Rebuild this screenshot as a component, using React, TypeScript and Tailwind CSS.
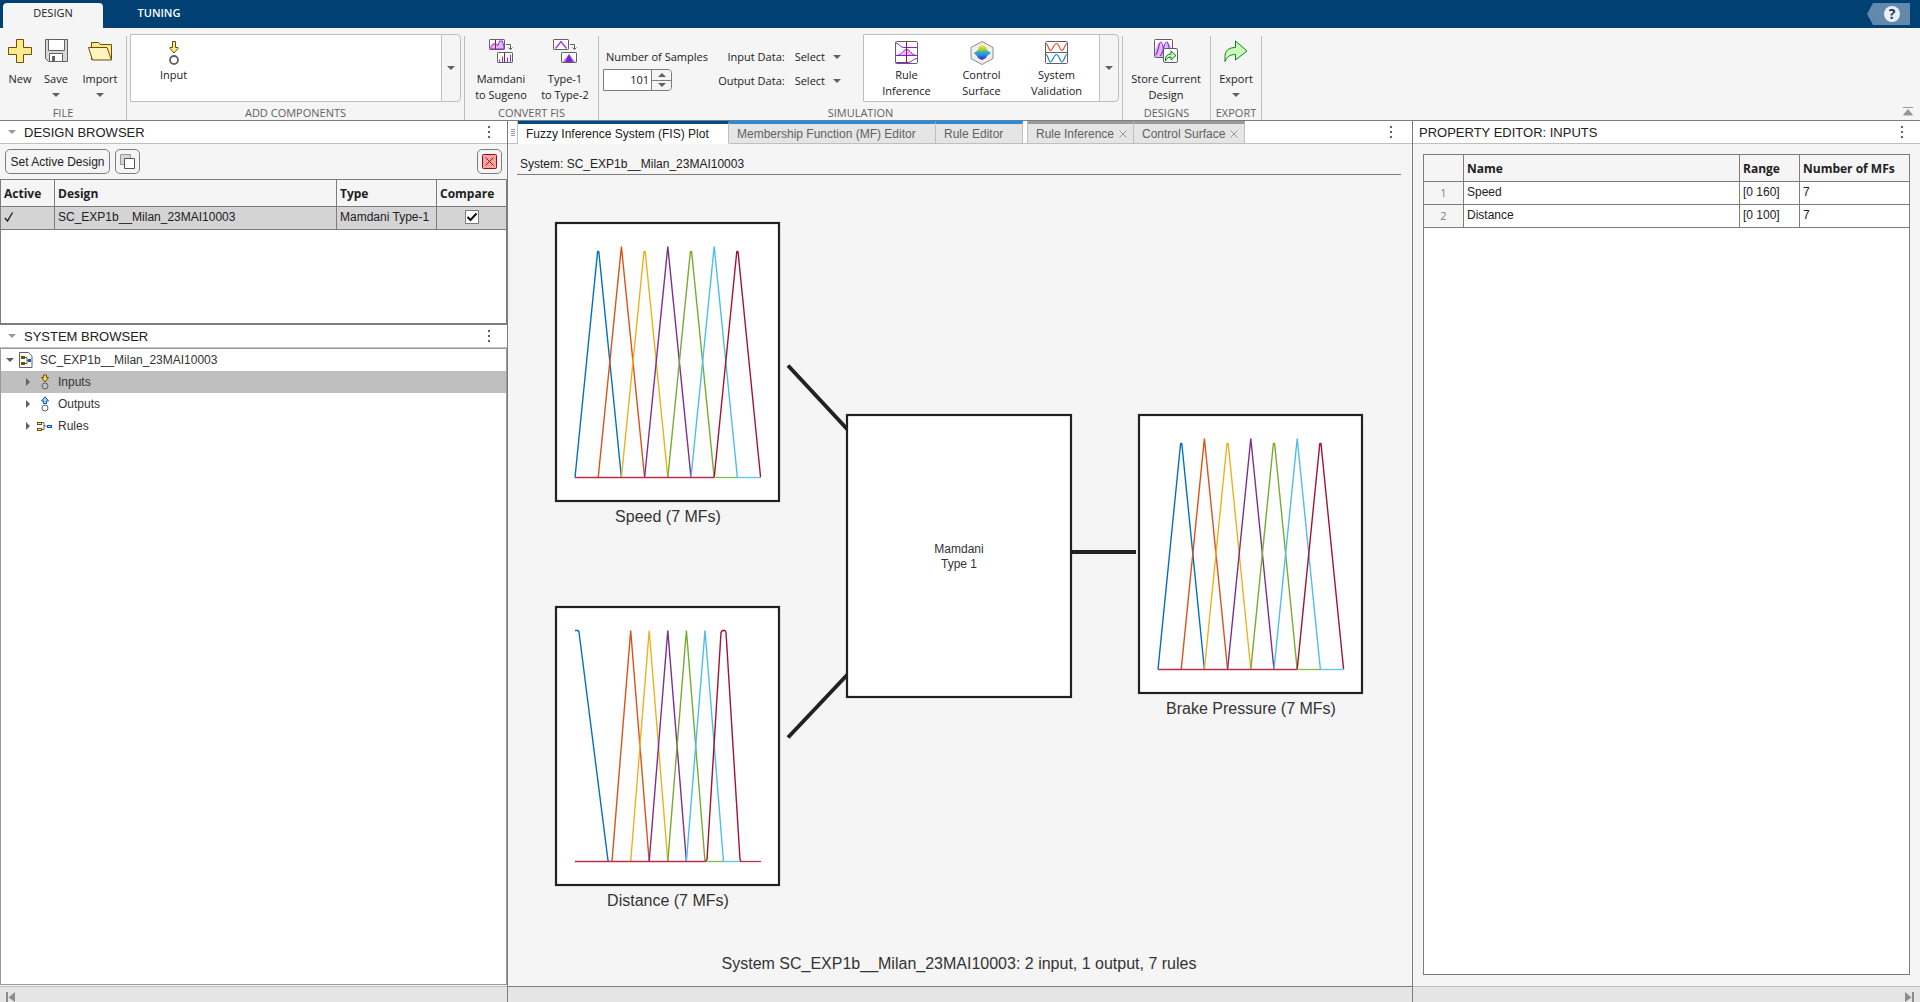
import { ReactNode } from "react";

const UI = "font-['Open_Sans',sans-serif]";

function Caret({ className = "text-[#616161]" }: { className?: string }) {
  return (
    <svg className={"h-1 w-2 shrink-0 " + className} viewBox="0 0 8 4" aria-hidden="true">
      <path d="M0 0h8L4 4z" fill="currentColor" />
    </svg>
  );
}

function Dots() {
  return (
    <button type="button" aria-label="Panel menu" className="flex h-5 w-3 flex-col items-center justify-center gap-[3px]">
      <span className="size-[2px] bg-[#616161]" />
      <span className="size-[2px] bg-[#616161]" />
      <span className="size-[2px] bg-[#616161]" />
    </button>
  );
}

/* ---------- toolstrip icons ---------- */

const NewIcon = () => (
  <svg className="size-6" viewBox="0 0 24 24" aria-hidden="true">
    <path d="M8.5.5h7v8h8v7h-8v8h-7v-8h-8v-7h8z" fill="#ffe98f" stroke="#6f4f00" />
  </svg>
);
const SaveIcon = () => (
  <svg className="size-6" viewBox="-1 0 24 24" aria-hidden="true">
    <path d="M.5.5h22v22H3.500l-3-3z" fill="#d6d6d6" stroke="#616161" />
    <path d="M3.500.5h16v11h-16z" fill="#fff" stroke="#616161" />
    <path d="M4.500 14.500h13v8h-13z" fill="#fff" stroke="#616161" />
    <path d="M7 17h3v5H7z" fill="#616161" />
  </svg>
);
const FolderIcon = () => (
  <svg className="size-6" viewBox="0 0 24 24" aria-hidden="true">
    <path d="M3.500 9V3.500h7l2 2h11v15h-20z" fill="#ffe98f" stroke="#6f4f00" />
    <path d="M.5 8.500h18.500l4.500 12.500H4.500z" fill="#fff3c0" stroke="#6f4f00" />
  </svg>
);
const InputIcon = () => (
  <svg className="size-6" viewBox="0 0 24 24" aria-hidden="true">
    <path d="M10.500.5h3v6h2.500v1L12 12 8 7.500v-1h2.500z" fill="#ffe98f" stroke="#6f4f00" />
    <circle cx="12" cy="19" r="4" fill="#fff" stroke="#616161" strokeWidth="1.800" />
  </svg>
);
const MamdaniIcon = () => (
  <svg className="size-6" viewBox="0 0 24 24" aria-hidden="true">
    <rect x=".5" y=".5" width="15" height="10" rx=".6" fill="#fff" stroke="#616161" />
    <path d="M2 10V7.500L4 5h3l2 1.500L10.500 2h3L15 8v2z" fill="#e0b8f8" stroke="#8a2be2" />
    <path d="M6.500 1v9" stroke="#a2142f" />
    <path d="M17 5.500h4.500V10M19.500 8.500l2 2 2-2" fill="none" stroke="#616161" />
    <rect x="8.500" y="13.500" width="15" height="10" rx=".6" fill="#fff" stroke="#616161" />
    <path d="M10.500 23.500v-3M13.500 23.500v-6M18.500 23.500v-5M21.500 23.500v-8" stroke="#8a2be2" />
    <path d="M15.500 14v9" stroke="#a2142f" />
  </svg>
);
const TypeIcon = () => (
  <svg className="size-6" viewBox="0 0 24 24" aria-hidden="true">
    <rect x=".5" y=".5" width="15" height="10" rx=".6" fill="#fff" stroke="#616161" />
    <path d="M2.500 9.500l5.500-7 5.500 7" fill="none" stroke="#9333ea" strokeWidth="1.300" />
    <path d="M17 5.500h4.500V10M19.500 8.500l2 2 2-2" fill="none" stroke="#616161" />
    <rect x="8.500" y="13.500" width="15" height="10" rx=".6" fill="#fff" stroke="#616161" />
    <path d="M9.500 23l6.500-8 6.500 8z" fill="#c084fc" />
    <path d="M12 23l4-8 4 8z" fill="#7e22ce" />
  </svg>
);
const RuleIcon = () => (
  <svg className="size-6" viewBox="0 0 24 24" aria-hidden="true">
    <rect x=".5" y=".5" width="22" height="22" rx="1" fill="#fff" stroke="#616161" />
    <path d="M4 14c4 0 5-6 8-6s4 6 8 6z" fill="#e0b8f8" />
    <path d="M1 2c3 0 4 4.500 8 4.500h13M1 14.500c6 0 7-6 10.500-6s5 6 10.500 6M1 14.500h21M1 21.500h12c4 0 5-4 9-4" fill="none" stroke="#8a1fd0" />
    <path d="M11.500 1v21" stroke="#a2142f" />
  </svg>
);
const SurfaceIcon = () => (
  <svg className="size-6" viewBox="0 0 24 24" aria-hidden="true">
    <defs>
      <linearGradient id="surf" x1="0" y1="0" x2="0" y2="1">
        <stop offset="0" stopColor="#f9f014" />
        <stop offset=".3" stopColor="#b5c832" />
        <stop offset=".48" stopColor="#27b7b0" />
        <stop offset=".7" stopColor="#2b7ff0" />
        <stop offset="1" stopColor="#3a20a0" />
      </linearGradient>
    </defs>
    <path d="M12 .5l11 6v11l-11 6-11-6v-11z" fill="#f0f0f0" stroke="#8a8a8a" />
    <path d="M12 4l4 2 1 3 4 3-4 3-1 2-4 2-4-2-1-2-3-3 4-3 1-3z" fill="url(#surf)" />
  </svg>
);
const ValidationIcon = () => (
  <svg className="size-6" viewBox="0 0 24 24" aria-hidden="true">
    <rect x=".5" y=".5" width="22" height="22" rx="1" fill="#fff" stroke="#616161" />
    <path d="M1 11.500h21" stroke="#616161" />
    <path d="M1 2.500c2 0 2.500 7 4.500 7s3.500-7 6-7 3.500 7 5.500 7 3-7 5-7" fill="none" stroke="#e0572a" strokeWidth="1.200" />
    <path d="M1 13.500c2 0 2.500 7.500 4.500 7.500s3.500-7.500 6-7.500 3.500 7.500 5.500 7.500 3-7.500 5-7.500" fill="none" stroke="#1f7fd0" strokeWidth="1.200" />
  </svg>
);
const StoreIcon = () => (
  <svg className="size-6" viewBox="0 0 24 24" aria-hidden="true">
    <rect x=".5" y=".5" width="18" height="18" rx="1" fill="#fff" stroke="#616161" />
    <path d="M1 18V10c1.500 0 2-6 4-7 2 2 3 6 4.500 6s2-4 4.500-6c2 1 2.500 7 4 7v8z" fill="#e0b8f8" />
    <path d="M1.500 16C4 14 5 3 7 3s3 15 6 15M6 17c3-1 4-14 6.500-14 2 0 2 6 5 12" fill="none" stroke="#8a2be2" strokeWidth="1.200" />
    <rect x="9.500" y="9.500" width="14" height="14" rx="1.500" fill="#fff" stroke="#616161" />
    <path d="M11.500 22v-2c0-3 2-5 5.500-5v-3l5 4.500-5 4.500v-3c-3 0-4.500 1.500-5.500 4z" fill="#c8f5b8" stroke="#127c1e" />
  </svg>
);
const ExportIcon = () => (
  <svg className="size-6" viewBox="0 0 24 24" aria-hidden="true">
    <path d="M1 22.500v-5C1 11.500 5 8.500 11.500 8.500V2l11.500 10-11.500 9v-5.500C6 15.500 2.500 18 1 22.500z" fill="#c9ffb8" stroke="#12801f" />
  </svg>
);

/* ---------- toolstrip parts ---------- */

function Tool({ icon, lines, caret, width }: { icon: ReactNode; lines: string[]; caret?: boolean; width: string }) {
  return (
    <button type="button" className={"flex shrink-0 flex-col items-center " + width}>
      {icon}
      <span className="mt-2 flex flex-col whitespace-nowrap text-center text-[11px] leading-4">
        {lines.map((l) => (
          <span key={l}>{l}</span>
        ))}
      </span>
      {caret && <span className="flex h-4 items-center"><Caret /></span>}
    </button>
  );
}

function GalleryItem({ icon, lines }: { icon: ReactNode; lines: string[] }) {
  return (
    <button type="button" className="flex w-[75px] flex-col items-center pt-1.5">
      {icon}
      <span className="mt-0.5 flex flex-col whitespace-nowrap text-center text-[11px] leading-4">
        {lines.map((l) => (
          <span key={l}>{l}</span>
        ))}
      </span>
    </button>
  );
}

function Gallery({ width, children }: { width: string; children: ReactNode }) {
  return (
    <div className={"flex h-[68px] rounded-r border border-[#bfbfbf] " + width}>
      <div className="flex flex-1 items-start bg-white pl-[5px]">{children}</div>
      <button type="button" aria-label="More" className="flex w-[19px] items-center justify-center border-l border-[#bfbfbf]">
        <Caret />
      </button>
    </div>
  );
}

function Section({ label, width, children }: { label: string; width: string; children: ReactNode }) {
  return (
    <section aria-label={label} className={"flex shrink-0 " + width}>
      <div className="flex min-w-0 flex-1 flex-col justify-between">
        {children}
        <div className="h-[15px] text-center text-[11px] leading-[15px] text-[#616161]">{label}</div>
      </div>
      <span className="mt-2 w-px bg-[#bfbfbf]" />
    </section>
  );
}

function SelectRow({ label }: { label: string }) {
  return (
    <button type="button" className="flex h-6 items-center justify-end whitespace-nowrap">
      <span>{label}</span>
      <span className="ml-2.5">Select</span>
      <Caret className="ml-2 text-[#616161]" />
    </button>
  );
}

function Toolstrip() {
  return (
    <div className={"flex h-[93px] shrink-0 border-b border-[#7d7d7d] bg-[#f5f5f5] " + UI}>
      <Section label="FILE" width="w-[127px]">
        <div className="flex pl-0.5 pt-[11px]">
          <Tool icon={<NewIcon />} lines={["New"]} width="w-9" />
          <Tool icon={<SaveIcon />} lines={["Save"]} caret width="w-9" />
          <Tool icon={<FolderIcon />} lines={["Import"]} caret width="w-[52px]" />
        </div>
      </Section>
      <Section label="ADD COMPONENTS" width="w-[338px]">
        <div className="pl-[3px] pt-1.5">
          <Gallery width="w-[331px]">
            <GalleryItem icon={<InputIcon />} lines={["Input"]} />
          </Gallery>
        </div>
      </Section>
      <Section label="CONVERT FIS" width="w-[134px]">
        <div className="flex pl-1 pt-[11px]">
          <Tool icon={<MamdaniIcon />} lines={["Mamdani", "to Sugeno"]} width="w-[64px]" />
          <Tool icon={<TypeIcon />} lines={["Type-1", "to Type-2"]} width="w-[64px]" />
        </div>
      </Section>
      <Section label="SIMULATION" width="w-[524px]">
        <div className="flex pt-1.5">
          <div className="flex w-[115px] flex-col items-start pl-1 pt-2.5 text-[11px]">
            <label htmlFor="samples" className="h-6 whitespace-nowrap pl-[3px] leading-[26px]">
              Number of Samples
            </label>
            <div className="mt-px flex h-[22px] w-[69px] rounded-r border border-[#7d7d7d] bg-white">
              <input id="samples" defaultValue="101" className="w-[47px] pr-0.5 text-right outline-none" />
              <div className="flex flex-1 flex-col rounded-r border-l border-[#7d7d7d] bg-[#f5f5f5]">
                <button type="button" aria-label="Increase" className="flex flex-1 items-center justify-center border-b border-[#7d7d7d]">
                  <Caret className="rotate-180 text-[#616161]" />
                </button>
                <button type="button" aria-label="Decrease" className="flex flex-1 items-center justify-center">
                  <Caret />
                </button>
              </div>
            </div>
          </div>
          <div className="flex w-[127px] flex-col pt-[11px] text-[11px]">
            <SelectRow label="Input Data:" />
            <SelectRow label="Output Data:" />
          </div>
          <div className="pl-[22px]">
            <Gallery width="w-64">
              <GalleryItem icon={<RuleIcon />} lines={["Rule", "Inference"]} />
              <GalleryItem icon={<SurfaceIcon />} lines={["Control", "Surface"]} />
              <GalleryItem icon={<ValidationIcon />} lines={["System", "Validation"]} />
            </Gallery>
          </div>
        </div>
      </Section>
      <Section label="DESIGNS" width="w-[88px]">
        <div className="flex pl-[3px] pt-[11px]">
          <Tool icon={<StoreIcon />} lines={["Store Current", "Design"]} width="w-20" />
        </div>
      </Section>
      <Section label="EXPORT" width="w-[51px]">
        <div className="flex pl-0.5 pt-[11px]">
          <Tool icon={<ExportIcon />} lines={["Export"]} caret width="w-[46px]" />
        </div>
      </Section>
      <button type="button" aria-label="Collapse toolstrip" className="mb-1 ml-auto mr-[7px] self-end text-[#999]">
        <svg className="block h-[9px] w-2.5" viewBox="0 0 10 9" aria-hidden="true">
          <path d="M0 .5h10M5 2.500l4.500 5.500h-9z" fill="currentColor" stroke="currentColor" strokeWidth="1" />
        </svg>
      </button>
    </div>
  );
}

/* ---------- left column ---------- */

function PanelHeader({ title, caret }: { title: string; caret?: boolean }) {
  return (
    <header className="flex h-[23px] shrink-0 items-center border-b border-[#bfbfbf] bg-white pr-3">
      {caret && <Caret className="ml-2 text-[#9a9a9a]" />}
      <h2 className={"pt-px text-[13px] leading-5 " + (caret ? "ml-2" : "ml-1.5")}>{title}</h2>
      <span className="ml-auto"><Dots /></span>
    </header>
  );
}

function DesignBrowser() {
  const th = "h-[27px] border-r border-b border-[#7d7d7d] px-[3px] pt-0.5 text-left font-bold last:border-r-0";
  const td = "h-[23px] border-r border-b border-[#7d7d7d] px-[3px] pb-0.5 last:border-r-0";
  return (
    <section className="flex h-[204px] shrink-0 flex-col">
      <PanelHeader title="DESIGN BROWSER" caret />
      <div className="flex h-[35px] shrink-0 items-center gap-[5px] bg-[#f5f5f5] px-[5px]">
        <button type="button" className="h-[25px] w-[105px] whitespace-nowrap rounded-[5px] border border-[#7d7d7d] text-xs">
          Set Active Design
        </button>
        <button type="button" aria-label="Duplicate design" className="flex size-[25px] items-center justify-center rounded-[5px] border border-[#7d7d7d]">
          <svg className="size-[15px]" viewBox="0 0 15 15" aria-hidden="true">
            <path d="M.5.5h10v10H.5z" fill="#d6d6d6" stroke="#9a9a9a" />
            <path d="M4.500 4.500h10v10h-10z" fill="#fff" stroke="#555" />
          </svg>
        </button>
        <button type="button" aria-label="Delete design" className="ml-auto flex size-[25px] items-center justify-center rounded-[5px] border border-[#7d7d7d]">
          <svg className="size-[15px]" viewBox="0 0 15 15" aria-hidden="true">
            <rect x=".5" y=".5" width="14" height="14" rx="1" fill="#fda4a0" stroke="#8f1010" />
            <path d="M3.500 3.500l8 8M11.500 3.500l-8 8" stroke="#8f1010" />
          </svg>
        </button>
      </div>
      <div className="flex-1 border border-b-2 border-[#7d7d7d] bg-white">
        <table className="w-full table-fixed border-separate border-spacing-0 text-xs">
          <colgroup>
            <col className="w-[54px]" />
            <col />
            <col className="w-[100px]" />
            <col className="w-[69px]" />
          </colgroup>
          <thead className={"bg-[#f5f5f5] " + UI}>
            <tr>
              <th className={th}>Active</th>
              <th className={th}>Design</th>
              <th className={th}>Type</th>
              <th className={th}>Compare</th>
            </tr>
          </thead>
          <tbody className="bg-[#d4d4d4]">
            <tr>
              <td className={td}>
                <svg className="size-2.5" viewBox="0 0 10 10" role="img" aria-label="Active">
                  <path d="M1 6l2.500 3L8.500 .5" fill="none" stroke="#222" strokeWidth="1.400" />
                </svg>
              </td>
              <td className={td}>SC_EXP1b__Milan_23MAI10003</td>
              <td className={td + " whitespace-nowrap"}>Mamdani Type-1</td>
              <td className={td}>
                <span className="relative mx-auto block size-3.5">
                  <input type="checkbox" defaultChecked aria-label="Compare SC_EXP1b__Milan_23MAI10003" className="block size-3.5 appearance-none border border-[#7d7d7d] bg-white" />
                  <svg className="pointer-events-none absolute inset-0 size-3.5" viewBox="0 0 14 14" aria-hidden="true">
                    <path d="M2.500 7l3 3 6-6.500" fill="none" stroke="#111" strokeWidth="2" />
                  </svg>
                </span>
              </td>
            </tr>
          </tbody>
        </table>
      </div>
    </section>
  );
}

const SideCaret = () => (
  <svg className="h-2 w-1" viewBox="0 0 4 8" aria-hidden="true">
    <path d="M0 0v8l4-4z" fill="#616161" />
  </svg>
);

const TreeFileIcon = () => (
  <svg className="ml-[5px] h-4 w-[14px]" viewBox="0 0 14 16" aria-hidden="true">
    <path d="M.5.500h9l3.500 3.500v11.500H.5z" fill="#fff" stroke="#616161" />
    <path d="M2 4h4v3H2zM2 10h4v3H2z" fill="#6f4f00" />
    <path d="M6 5.500h2v6H6M8 8.500h2" fill="none" stroke="#616161" />
    <path d="M9 7h3v3H9z" fill="#0b5cad" />
  </svg>
);
const TreeInputIcon = () => (
  <svg className="ml-[5px] h-4 w-5" viewBox="0 0 20 16" aria-hidden="true">
    <path d="M8.500 1h3v2.500h2L10 8 6.500 3.500h2z" fill="#ffd84a" stroke="#6f4f00" />
    <circle cx="10" cy="12" r="3" fill="none" stroke="#616161" />
  </svg>
);
const TreeOutputIcon = () => (
  <svg className="ml-[5px] h-4 w-5" viewBox="0 0 20 16" aria-hidden="true">
    <path d="M8.500 7.500h3V5h2L10 .7 6.500 5h2z" fill="#9fd4ff" stroke="#0b5cad" />
    <circle cx="10" cy="12" r="3" fill="#fff" stroke="#616161" />
  </svg>
);
const TreeRuleIcon = () => (
  <svg className="ml-[5px] h-4 w-5" viewBox="0 0 20 16" aria-hidden="true">
    <rect x="2.500" y="4.500" width="4" height="2" fill="#ffe98f" stroke="#6f4f00" />
    <rect x="2.500" y="10.500" width="4" height="2" fill="#ffe98f" stroke="#6f4f00" />
    <path d="M7 4.500h2v7H7M9 8h2.500" fill="none" stroke="#616161" />
    <rect x="12.500" y="7.500" width="4" height="2" fill="#9fd4ff" stroke="#0b5cad" />
  </svg>
);

function SystemBrowser() {
  const items = [
    { name: "Inputs", icon: <TreeInputIcon />, selected: true },
    { name: "Outputs", icon: <TreeOutputIcon />, selected: false },
    { name: "Rules", icon: <TreeRuleIcon />, selected: false },
  ];
  return (
    <section className="flex min-h-0 flex-1 flex-col">
      <PanelHeader title="SYSTEM BROWSER" caret />
      <div role="tree" aria-label="System" className="mb-px flex-1 border border-[#999] bg-white text-xs text-[#333]">
        <div role="treeitem" aria-selected="false" className="flex h-[22px] items-center pl-[5px]">
          <Caret />
          <TreeFileIcon />
          <span className="ml-[7px]">SC_EXP1b__Milan_23MAI10003</span>
        </div>
        {items.map((it) => (
          <div
            key={it.name}
            role="treeitem"
            aria-selected={it.selected}
            className={"flex h-[22px] items-center pl-[25px] " + (it.selected ? "bg-[#bfbfbf]" : "")}
          >
            <SideCaret />
            {it.icon}
            <span className="ml-[3px]">{it.name}</span>
          </div>
        ))}
      </div>
    </section>
  );
}

/* ---------- centre: FIS plot ---------- */

const COLORS = ["#0072bd", "#d95319", "#edb120", "#7e2f8e", "#77ac30", "#4dbeee", "#a2142f"];

const EVEN_CURVES = COLORS.map((_, i) => {
  const c = 23.2 * (i + 1);
  const peak = i % 2 === 0 ? `${c - 0.6},5 ${c + 0.6},5` : `${c},0`;
  return `${c - 23.2},231 ${peak} ${c + 23.2},231`;
});

const DISTANCE_CURVES = [
  "0,0 3,0 4,1.5 33,230 34,231",
  "37,231 55.7,0 74.2,231",
  "55.7,231 74.2,0 92.8,231",
  "74.2,231 92.8,0 111.4,231",
  "92.8,231 111.4,0 130,231",
  "111.4,231 130,0 148.5,231",
  "130.5,231 132,229 146,2 147.5,0 150,0 151,2 165,229 166,231",
];

type Base = [number, number, string][];

function MfNode({ x, y, label, curves, base }: { x: number; y: number; label: string; curves: string[]; base: Base }) {
  return (
    <g transform={`translate(${x} ${y})`}>
      <rect x="1" y="1" width="223" height="278" fill="#fff" stroke="#212121" strokeWidth="2.200" />
      <g transform="translate(20 24.500)" fill="none" strokeWidth="1.400" strokeLinejoin="bevel">
        {curves.map((p, i) => (
          <polyline key={i} points={p} stroke={COLORS[i]} />
        ))}
        {base.map(([a, b, c]) => (
          <path key={a} d={`M${a} 231H${b}`} stroke={c} strokeWidth="1.300" />
        ))}
      </g>
      <text x="113" y="300" textAnchor="middle" fontSize="16" fill="#333">
        {label}
      </text>
    </g>
  );
}

function FisPlot() {
  const evenBase: Base = [
    [0, 139, "#b8304c"],
    [139, 162, "#85ba48"],
    [162, 186, "#5cc4f0"],
  ];
  const distBase: Base = [
    [0, 131, "#b8304c"],
    [131, 148, "#85ba48"],
    [148, 165, "#5cc4f0"],
    [165, 186, "#b8304c"],
  ];
  return (
    <svg viewBox="508 175 904 811" className="min-h-0 w-full flex-1 font-['Liberation_Sans',Arial,sans-serif]" role="img" aria-label="Fuzzy inference system plot">
      <g stroke="#212121" strokeWidth="4">
        <path d="M788 365.500L848 430M788 737.500L848 674M1071 552h65" />
      </g>
      <MfNode x={555} y={222} label="Speed (7 MFs)" curves={EVEN_CURVES} base={evenBase} />
      <MfNode x={555} y={606} label="Distance (7 MFs)" curves={DISTANCE_CURVES} base={distBase} />
      <rect x="847" y="415" width="224" height="282" fill="#fff" stroke="#212121" strokeWidth="2.200" />
      <text x="959" y="553" textAnchor="middle" fontSize="12" fill="#333">Mamdani</text>
      <text x="959" y="568" textAnchor="middle" fontSize="12" fill="#333">Type 1</text>
      <MfNode x={1138} y={414} label="Brake Pressure (7 MFs)" curves={EVEN_CURVES} base={evenBase} />
      <text x="959" y="969" textAnchor="middle" fontSize="16" fill="#333">
        System SC_EXP1b__Milan_23MAI10003: 2 input, 1 output, 7 rules
      </text>
    </svg>
  );
}

function DocTab({ label, kind, width }: { label: string; kind: "active" | "editor" | "doc"; width: string }) {
  const tone =
    kind === "active"
      ? "border-t-[#004b87] bg-white text-[#212121] border-b-white"
      : kind === "editor"
        ? "border-t-[#268cdd] bg-[#e5e5e5] text-[#616161] border-b-[#bfbfbf]"
        : "border-t-[#999] bg-[#e5e5e5] text-[#616161] border-b-[#bfbfbf]";
  return (
    <button type="button" role="tab" aria-selected={kind === "active"} className={"flex h-[23px] shrink-0 items-center justify-between whitespace-nowrap border-t-[3px] border-r border-b border-r-[#bfbfbf] pl-2 pr-1.5 text-xs " + tone + " " + width}>
      {label}
      {kind === "doc" && (
        <svg className="size-2" viewBox="0 0 8 8" aria-label="Close">
          <path d="M.5.500l7 7M7.500.500l-7 7" stroke="#999" />
        </svg>
      )}
    </button>
  );
}

function Centre() {
  return (
    <main className="flex min-w-0 flex-1 flex-col border-x border-[#7d7d7d]">
      <div role="tablist" className="flex h-[23px] shrink-0 bg-white">
        <span className="flex w-[10px] flex-col items-center justify-center gap-px border-b border-r border-[#bfbfbf]">
          <span className="h-px w-1 bg-[#999]" />
          <span className="h-px w-1 bg-[#999]" />
          <span className="h-px w-1 bg-[#999]" />
          <span className="h-px w-1 bg-[#999]" />
        </span>
        <DocTab label="Fuzzy Inference System (FIS) Plot" kind="active" width="w-[211px]" />
        <DocTab label="Membership Function (MF) Editor" kind="editor" width="w-[207px]" />
        <DocTab label="Rule Editor" kind="editor" width="w-[87px]" />
        <span className="w-[5px] border-r border-b border-[#bfbfbf]" />
        <DocTab label="Rule Inference" kind="doc" width="w-[106px]" />
        <DocTab label="Control Surface" kind="doc" width="w-[111px]" />
        <span className="flex flex-1 items-center justify-end border-b border-[#bfbfbf] pr-[15px]"><Dots /></span>
      </div>
      <div className="ml-[9px] mr-[11px] flex h-[31px] shrink-0 items-end border-b border-[#7d7d7d] pb-0.5 pl-[3px] text-xs leading-4">
        System: SC_EXP1b__Milan_23MAI10003
      </div>
      <FisPlot />
      <div className="h-4 shrink-0 border-t border-[#7d7d7d] bg-[#e5e5e5]" />
    </main>
  );
}

/* ---------- right column ---------- */

function PropertyEditor() {
  const rows = [
    ["1", "Speed", "[0 160]", "7"],
    ["2", "Distance", "[0 100]", "7"],
  ];
  const line = "border-r border-b border-[#7d7d7d] last:border-r-0";
  return (
    <aside className="flex w-[507px] shrink-0 flex-col">
      <PanelHeader title="PROPERTY EDITOR: INPUTS" />
      <div className="mx-2.5 mb-[11px] mt-2.5 flex-1 border border-[#7d7d7d] bg-white">
        <table className="w-full table-fixed border-separate border-spacing-0 text-xs">
          <colgroup>
            <col className="w-10" />
            <col />
            <col className="w-[60px]" />
            <col className="w-[109px]" />
          </colgroup>
          <thead className={"bg-[#f5f5f5] " + UI}>
            <tr>
              <th aria-label="Row" className={"h-[27px] " + line} />
              <th className={"pl-[3px] pt-0.5 text-left font-bold " + line}>Name</th>
              <th className={"pl-[3px] pt-0.5 text-left font-bold " + line}>Range</th>
              <th className={"pl-[3px] pt-0.5 text-left font-bold " + line}>Number of MFs</th>
            </tr>
          </thead>
          <tbody>
            {rows.map((r) => (
              <tr key={r[0]}>
                <td className={"h-[23px] bg-[#f5f5f5] text-center text-[11px] text-[#7d7d7d] " + line + " " + UI}>{r[0]}</td>
                <td className={"pb-0.5 pl-[3px] " + line}>{r[1]}</td>
                <td className={"pb-0.5 pl-[3px] " + line}>{r[2]}</td>
                <td className={"pb-0.5 pl-[3px] " + line}>{r[3]}</td>
              </tr>
            ))}
          </tbody>
        </table>
      </div>
      <StatusBar side="right" />
    </aside>
  );
}

function StatusBar({ side }: { side: "left" | "right" }) {
  return (
    <div className={"flex h-4 shrink-0 overflow-hidden border-t border-[#bfbfbf] bg-[#e5e5e5] px-[6px] pt-[5px] " + (side === "right" ? "justify-end" : "")}>
      <button type="button" aria-label={side === "left" ? "Collapse left" : "Collapse right"} className="h-2.5">
        <svg className="block h-2.5 w-[9px]" viewBox="0 0 9 10" aria-hidden="true">
          {side === "left" ? <path d="M0 0h2v10H0zM9 0v10L2.500 5.500z" fill="#8c8c8c" /> : <path d="M7 0h2v10H7zM0 0v10l6.500-4.500z" fill="#8c8c8c" />}
        </svg>
      </button>
    </div>
  );
}

export default function App() {
  return (
    <div className="flex h-screen flex-col overflow-hidden bg-[#f5f5f5] font-['Liberation_Sans',Arial,sans-serif] text-[#212121]">
      <nav role="tablist" className={"flex h-7 shrink-0 items-end bg-[#004073] pl-[3px] text-[11px] " + UI}>
        <button type="button" role="tab" aria-selected="true" className="h-[25px] w-[100px] rounded-t-sm bg-[#f5f5f5] pb-1">
          DESIGN
        </button>
        <button type="button" role="tab" aria-selected="false" className="h-[25px] w-28 pb-1 font-semibold text-white">
          TUNING
        </button>
        <button type="button" aria-label="Help" className="mb-[3px] ml-auto mr-2.5">
          <svg className="block h-[22px] w-[43px]" viewBox="0 0 43 22" aria-hidden="true">
            <path d="M0 11L6 0h37v22H6z" fill="#6289ab" />
            <circle cx="25" cy="11" r="8" fill="#e9eff4" />
            <text x="25" y="16" textAnchor="middle" fontSize="14" fontWeight="bold" fill="#1d3a5c">?</text>
          </svg>
        </button>
      </nav>
      <Toolstrip />
      <div className="flex min-h-0 flex-1">
        <div className="flex w-[507px] shrink-0 flex-col">
          <DesignBrowser />
          <SystemBrowser />
          <StatusBar side="left" />
        </div>
        <Centre />
        <PropertyEditor />
      </div>
    </div>
  );
}
